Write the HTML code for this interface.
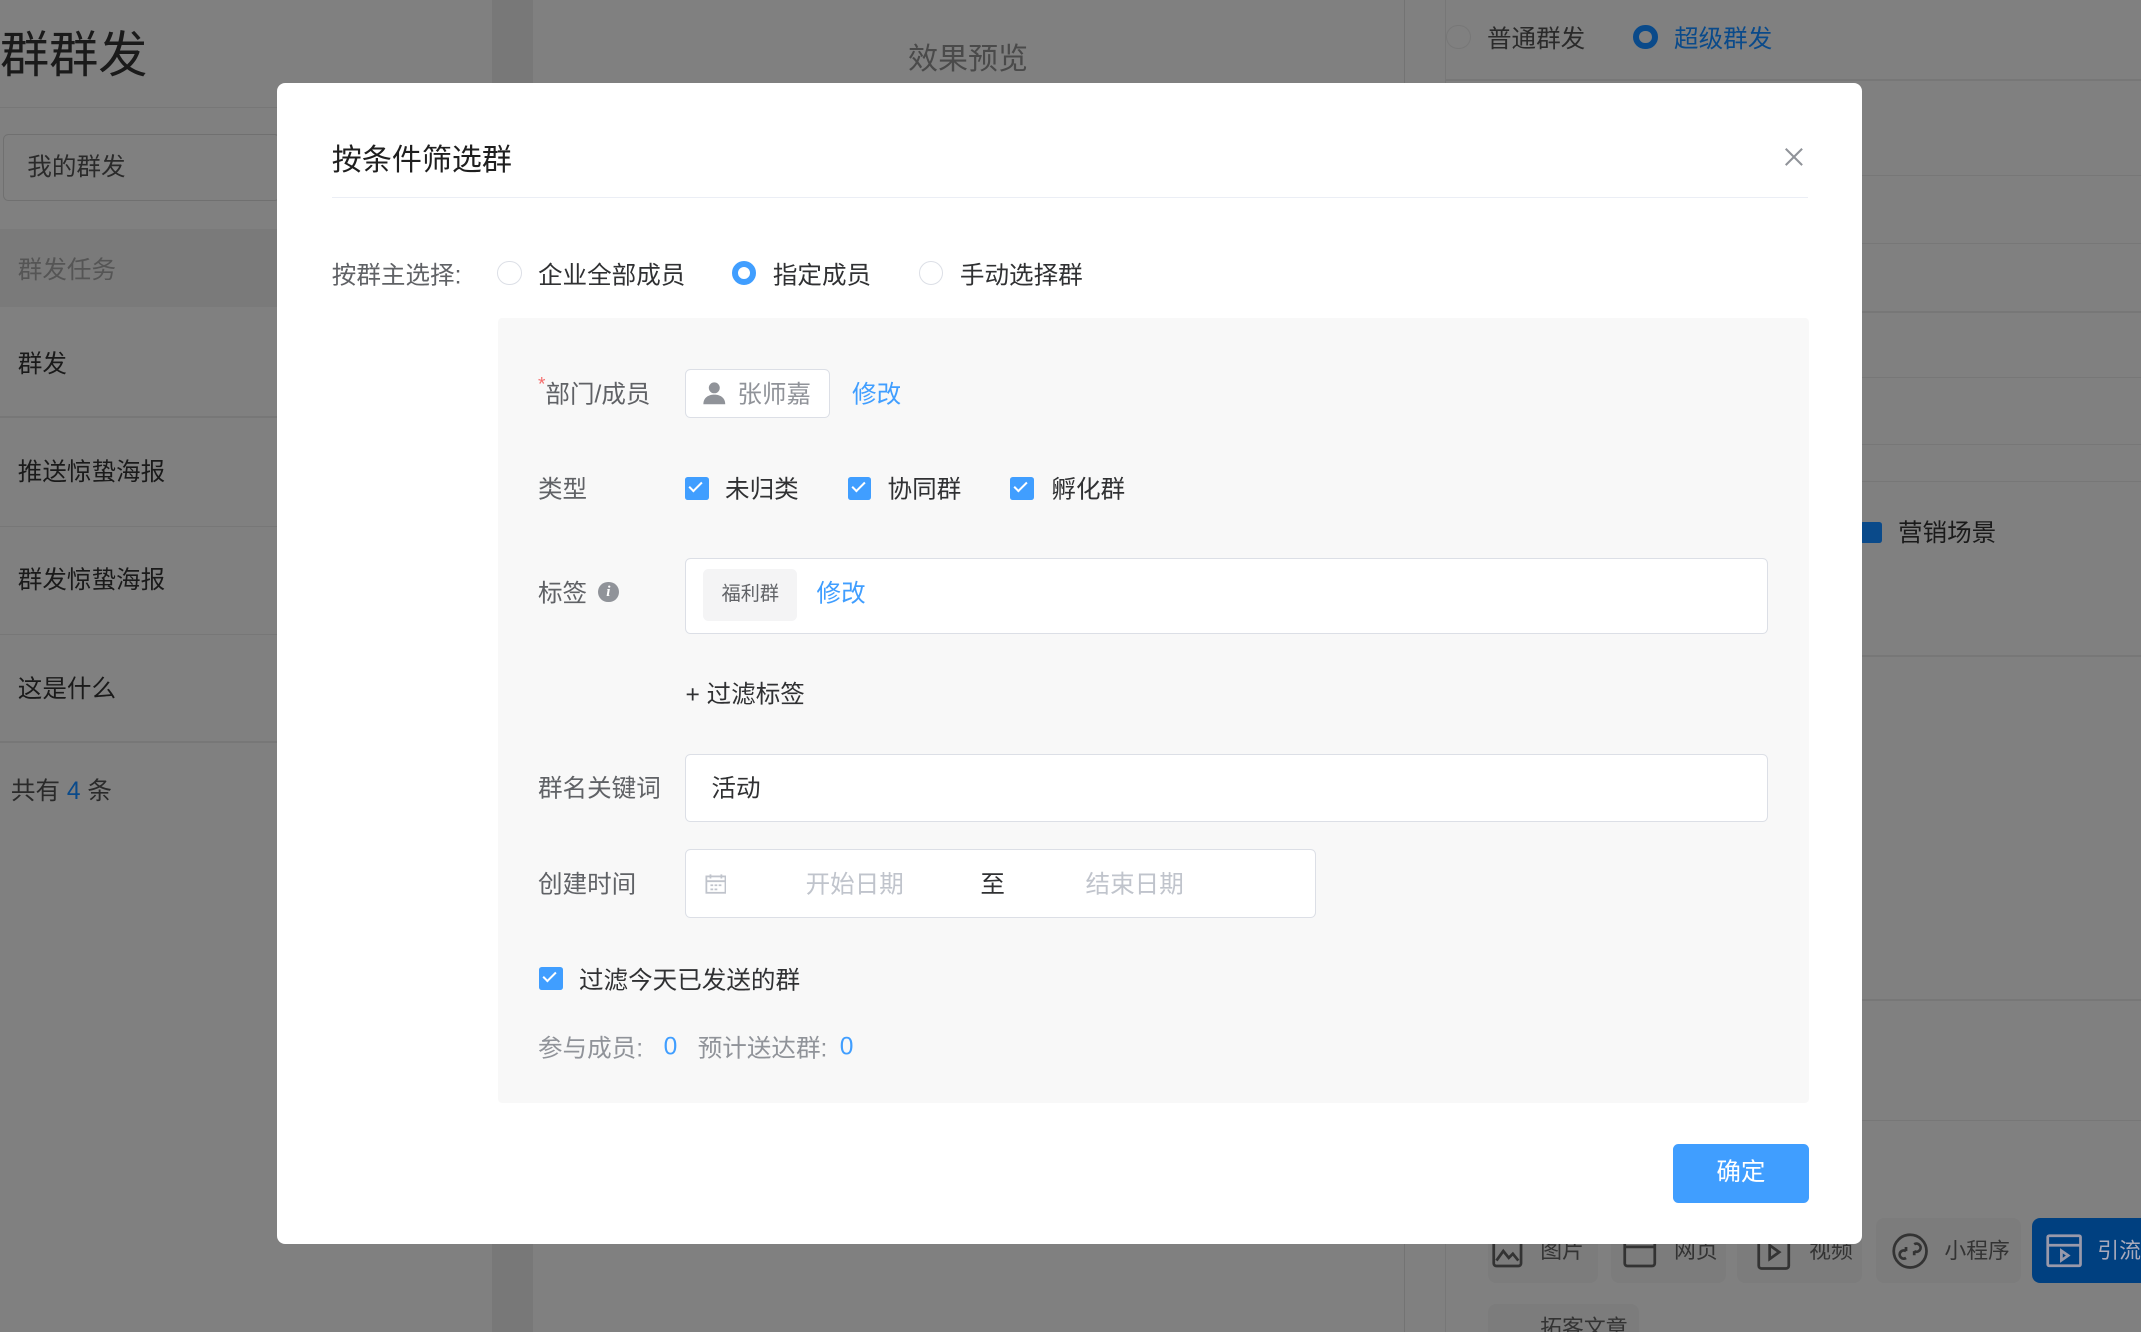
<!DOCTYPE html>
<html><head><meta charset="utf-8"><style>
*{box-sizing:border-box;margin:0;padding:0}
html,body{width:2141px;height:1332px;overflow:hidden;background:#777}
#s{zoom:1.36543;width:1568px;height:976px;position:relative;font-family:"Liberation Sans","Noto Sans CJK SC",sans-serif;color:#303133;background:#787878}
.a{position:absolute;white-space:nowrap}
.lp{position:absolute;left:0;top:0;width:360px;height:976px;background:#808080}
.mp{position:absolute;left:390px;top:0;width:638px;height:976px;background:#808080}
.rp{position:absolute;left:1028px;top:0;width:540px;height:976px;background:#808080;border-left:1px solid #737373}
.hl{position:absolute;height:1px;background:#777}
.t1{color:#1a1a1a}
.modal{position:absolute;left:203px;top:61px;width:1161px;height:850px;background:#fff;border-radius:6px}
.lab{position:absolute;font-size:18px;color:#606266;white-space:nowrap;transform:translateY(-2px)}
.num{transform:translateY(1px)}
.rad{position:absolute;width:18px;height:18px;border:1px solid #dcdfe6;border-radius:50%;background:#fff}
.rad.on{border:5px solid #409eff}
.cb{position:absolute;width:17px;height:17px;background:#409eff;border-radius:2px}
.cb:after{content:"";position:absolute;left:5px;top:2px;width:4px;height:8px;border:solid #fff;border-width:0 1.5px 1.5px 0;transform:rotate(45deg)}
.inp{position:absolute;background:#fff;border:1px solid #dcdfe6;border-radius:4px}
.btm{position:absolute;top:892px;height:48px;background:#7c7c7c;border-radius:6px;font-size:16px;color:#333;line-height:48px;white-space:nowrap;overflow:hidden}
</style></head><body><div id="s">
<div class="lp"></div><div class="mp"></div><div class="rp"></div>
<div class="a t1" style="left:0;top:12px;font-size:36px">群群发</div>
<div class="hl" style="left:0;top:78px;width:360px"></div>
<div class="a" style="left:2px;top:98px;width:203px;height:49px;border:1px solid #707070;border-radius:4px;background:#808080"></div>
<div class="a" style="left:20px;top:108px;font-size:18px;color:#2a2a2a">我的群发</div>
<div class="a" style="left:0;top:168px;width:360px;height:57px;background:#7a7a7a"></div>
<div class="a" style="left:13px;top:183px;font-size:18px;color:#555">群发任务</div>
<div class="a" style="left:13px;top:252px;font-size:18px;color:#1a1a1a">群发</div>
<div class="hl" style="left:0;top:305px;width:360px"></div>
<div class="a" style="left:13px;top:331px;font-size:18px;color:#1a1a1a">推送惊蛰海报</div>
<div class="hl" style="left:0;top:385px;width:360px"></div>
<div class="a" style="left:13px;top:410px;font-size:18px;color:#1a1a1a">群发惊蛰海报</div>
<div class="hl" style="left:0;top:464px;width:360px"></div>
<div class="a" style="left:13px;top:490px;font-size:18px;color:#1a1a1a">这是什么</div>
<div class="hl" style="left:0;top:543px;width:360px"></div>
<div class="a" style="left:8px;top:565px;font-size:18px;color:#2a2a2a">共有 <span style="color:#0a4a8a">4</span> 条</div>
<div class="a" style="left:665px;top:25px;font-size:22px;color:#4a4a4a">效果预览</div>
<div class="a" style="left:1058px;top:0;width:1px;height:976px;background:#777"></div>
<div class="a" style="left:1059px;top:18px;width:18px;height:18px;border-radius:50%;border:1px solid #777"></div>
<div class="a" style="left:1089px;top:14px;font-size:18px;color:#2a2a2a">普通群发</div>
<div class="a" style="left:1196px;top:18px;width:18px;height:18px;border-radius:50%;border:5px solid #0a4a8a"></div>
<div class="a" style="left:1226px;top:14px;font-size:18px;color:#0a4a8a">超级群发</div>
<div class="hl" style="left:1058px;top:58px;width:510px"></div>
<div class="hl" style="left:1364px;top:128px;width:204px"></div>
<div class="hl" style="left:1364px;top:178px;width:204px"></div>
<div class="hl" style="left:1364px;top:228px;width:204px"></div>
<div class="hl" style="left:1364px;top:276px;width:204px"></div>
<div class="hl" style="left:1364px;top:325px;width:204px"></div>
<div class="hl" style="left:1364px;top:352px;width:204px"></div>
<div class="hl" style="left:1364px;top:480px;width:204px"></div>
<div class="hl" style="left:1364px;top:732px;width:204px"></div>
<div class="hl" style="left:1364px;top:820px;width:204px"></div>
<div class="a" style="left:1362px;top:382px;width:16px;height:16px;background:#0a4a8a;border-radius:2px"></div>
<div class="a" style="left:1390px;top:376px;font-size:18px;color:#1a1a1a">营销场景</div>
<div class="btm" style="left:1090px;width:80px;padding-left:38px">图片</div>
<div class="btm" style="left:1180px;width:84px;padding-left:46px">网页</div>
<div class="btm" style="left:1272px;width:92px;padding-left:53px">视频</div>
<div class="btm" style="left:1374px;width:106px;padding-left:50px">小程序</div>
<div class="btm" style="left:1488px;width:100px;padding-left:48px;background:#004080;color:#aab">引流</div>
<svg class="a" style="left:1092px;top:905px" width="24" height="24" fill="none" stroke="#333" stroke-width="2"><rect x="2" y="2" width="20" height="20" rx="2"/><path d="M4 18l5-7 4 5 3-3 4 5"/></svg>
<svg class="a" style="left:1188px;top:905px" width="26" height="24" fill="none" stroke="#333" stroke-width="2"><rect x="2" y="2" width="22" height="20" rx="2"/><path d="M2 8h22"/></svg>
<svg class="a" style="left:1286px;top:903px" width="26" height="28" fill="none" stroke="#333" stroke-width="2"><rect x="2" y="2" width="22" height="24" rx="2"/><path d="M10 9v10l7-5z"/></svg>
<svg class="a" style="left:1385px;top:902px" width="28" height="28" fill="none" stroke="#333" stroke-width="2"><circle cx="14" cy="14" r="12"/><path d="M11 19a3 3 0 1 1 0-5M17 9a3 3 0 1 1 0 5M11 14V11M17 14v3"/></svg>
<svg class="a" style="left:1498px;top:903px" width="28" height="26" fill="none" stroke="#99a" stroke-width="2"><rect x="2" y="2" width="24" height="22" rx="1"/><path d="M2 9h24M12 13v7l5-3.5z"/></svg>
<div class="a" style="left:1090px;top:955px;width:110px;height:30px;background:#7c7c7c;border-radius:6px"></div>
<div class="a" style="left:1128px;top:960px;font-size:16px;color:#333">拓客文章</div>

<div class="modal"></div>
<div class="a" style="left:243px;top:99px;font-size:22px;color:#1f1f1f">按条件筛选群</div>
<svg class="a" style="left:1306px;top:107px" width="16" height="16" stroke="#909399" stroke-width="1.5"><path d="M2 2l12 12M14 2L2 14"/></svg>
<div class="a" style="left:243px;top:144px;width:1081px;height:1px;background:#ebeef5"></div>
<div class="lab" style="left:243px;top:189px">按群主选择:</div>
<div class="rad" style="left:364px;top:191px"></div><div class="lab" style="left:394px;top:189px;color:#303133">企业全部成员</div>
<div class="rad on" style="left:536px;top:191px"></div><div class="lab" style="left:566px;top:189px;color:#303133">指定成员</div>
<div class="rad" style="left:673px;top:191px"></div><div class="lab" style="left:703px;top:189px;color:#303133">手动选择群</div>
<div class="a" style="left:365px;top:233px;width:960px;height:575px;background:#f8f8f8;border-radius:3px"></div>
<div class="lab" style="left:394px;top:276px"><span style="color:#f56c6c;font-size:14px;vertical-align:top">*</span>部门/成员</div>
<div class="inp" style="left:502px;top:270px;width:106px;height:36px"></div>
<svg class="a" style="left:514px;top:279px" width="18" height="18" fill="#909399"><circle cx="9" cy="5" r="4"/><path d="M1 17c0-5 4-7 8-7s8 2 8 7z"/></svg>
<div class="lab" style="left:540px;top:276px;color:#909399">张师嘉</div>
<div class="lab" style="left:624px;top:276px;color:#409eff">修改</div>
<div class="lab" style="left:394px;top:346px">类型</div>
<div class="cb" style="left:502px;top:349px"></div><div class="lab" style="left:531px;top:346px;color:#303133">未归类</div>
<div class="cb" style="left:621px;top:349px"></div><div class="lab" style="left:650px;top:346px;color:#303133">协同群</div>
<div class="cb" style="left:740px;top:349px"></div><div class="lab" style="left:770px;top:346px;color:#303133">孵化群</div>
<div class="lab" style="left:394px;top:422px">标签</div>
<div class="a" style="left:438px;top:426px;width:15px;height:15px;border-radius:50%;background:#909399;color:#fff;font-size:11px;font-style:italic;font-weight:bold;text-align:center;line-height:15px;font-family:'Liberation Serif',serif">i</div>
<div class="inp" style="left:502px;top:409px;width:793px;height:55px"></div>
<div class="a" style="left:515px;top:417px;width:69px;height:38px;background:#f4f4f5;border-radius:4px;font-size:14px;color:#606266;text-align:center;line-height:38px">福利群</div>
<div class="lab" style="left:598px;top:422px;color:#409eff">修改</div>
<div class="lab" style="left:502px;top:496px;color:#303133">+ 过滤标签</div>
<div class="lab" style="left:394px;top:565px">群名关键词</div>
<div class="inp" style="left:502px;top:552px;width:793px;height:50px"></div>
<div class="lab" style="left:521px;top:565px;color:#303133">活动</div>
<div class="lab" style="left:394px;top:635px">创建时间</div>
<div class="inp" style="left:502px;top:622px;width:462px;height:50px"></div>
<svg class="a" style="left:516px;top:639px" width="16" height="16" fill="none" stroke="#c0c4cc" stroke-width="1.3"><rect x="1" y="2.5" width="14" height="12"/><path d="M1 6h14M4 1v3M12 1v3M4 9h2M7 9h2M10 9h2M4 12h2M7 12h2"/></svg>
<div class="lab" style="left:590px;top:635px;color:#c0c4cc">开始日期</div>
<div class="lab" style="left:718px;top:635px;color:#303133">至</div>
<div class="lab" style="left:795px;top:635px;color:#c0c4cc">结束日期</div>
<div class="cb" style="left:395px;top:708px"></div><div class="lab" style="left:424px;top:705px;color:#303133">过滤今天已发送的群</div>
<div class="lab" style="left:394px;top:755px;color:#909399">参与成员:</div>
<div class="lab num" style="left:486px;top:756px;color:#409eff">0</div>
<div class="lab" style="left:511px;top:755px;color:#909399">预计送达群:</div>
<div class="lab num" style="left:615px;top:756px;color:#409eff">0</div>
<div class="a" style="left:1225px;top:838px;width:100px;height:43px;background:#409eff;border-radius:4px;color:#fff;font-size:18px;text-align:center;line-height:43px">确定</div>
</div></body></html>
